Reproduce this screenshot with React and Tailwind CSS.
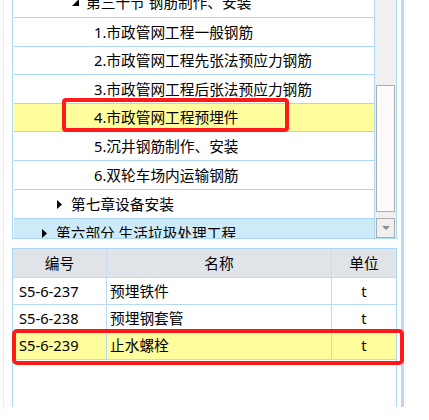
const font = { fontFamily: '"Noto Sans", "Noto Sans CJK SC", sans-serif' };

const Tri = () => (
    <svg width="5" height="9" viewBox="0 0 5 9" className="shrink-0">
        <polygon points="0,0 5,4.5 0,9" fill="#000" />
    </svg>
);

const treeRows = [
    { h: "h-[30px]", pl: "pl-[58px]", icon: "open", text: "第三十节 钢筋制作、安装" },
    { h: "h-[29px]", pl: "pl-[80px]", text: "1.市政管网工程一般钢筋" },
    { h: "h-[28px]", pl: "pl-[80px]", text: "2.市政管网工程先张法预应力钢筋" },
    { h: "h-[29px]", pl: "pl-[80px]", text: "3.市政管网工程后张法预应力钢筋" },
    { h: "h-[28px]", pl: "pl-[80px]", text: "4.市政管网工程预埋件", bg: "bg-[#fffd9c]" },
    { h: "h-[29px]", pl: "pl-[80px]", text: "5.沉井钢筋制作、安装" },
    { h: "h-[29px]", pl: "pl-[80px]", text: "6.双轮车场内运输钢筋" },
    { h: "h-[29px]", pl: "pl-[43px]", icon: "closed", text: "第七章设备安装" },
    { h: "h-[29px]", pl: "pl-[28px]", icon: "closed", text: "第六部分 生活垃圾处理工程", bg: "bg-[#cdeaf8]" },
];

const items = [
    { code: "S5-6-237", name: "预埋铁件", unit: "t" },
    { code: "S5-6-238", name: "预埋钢套管", unit: "t" },
    { code: "S5-6-239", name: "止水螺栓", unit: "t", hl: true },
];

export default function App() {
    return (
        <div className="w-[429px] h-[420px] bg-white relative overflow-hidden text-black" style={font}>
            <div className="ml-[3px] w-[401px] h-[407px] border-l border-l-[#ececec] border-r-[3px] border-r-[#c3d5e7] pl-[8px] pr-[4px] flex flex-col">
                {/* tree */}
                <div className="h-[239px] shrink-0 flex border-l border-r border-b border-[#aad8f4]">
                    <div className="flex-1 pl-[1px] overflow-hidden">
                        <div className="-mt-[12px]">
                            {treeRows.map((r, i) => (
                                <div
                                    key={i}
                                    className={`${r.h} ${r.pl} ${r.bg || "bg-white"} flex items-center border-b border-[#aad8f4] text-[14.7px] leading-none whitespace-nowrap`}
                                >
                                    {r.icon === "open" && (
                                        <svg width="7" height="7" viewBox="0 0 7 7" className="shrink-0 mr-[7px]">
                                            <polygon points="7,0 7,7 0,7" fill="#000" />
                                        </svg>
                                    )}
                                    {r.icon === "closed" && (
                                        <span className="mr-[9px] flex">
                                            <Tri />
                                        </span>
                                    )}
                                    <span>{r.text}</span>
                                </div>
                            ))}
                        </div>
                    </div>
                    <div className="w-[22px] shrink-0 border-l border-[#aad8f4] bg-[#f0f0f0] pl-[1px]">
                        <div className="mt-[85px] h-[127px] w-[19px] border border-[#adadad] bg-[#fbfbfb]" />
                        <div className="mt-[6px] h-[20px] w-[19px] border border-[#adadad] bg-[#f0f0f0] flex items-center justify-center">
                            <svg width="8" height="4" viewBox="0 0 8 4">
                                <polygon points="0,0 8,0 4,4" fill="#8c8c8c" />
                            </svg>
                        </div>
                    </div>
                </div>

                {/* table */}
                <div className="mt-[9px] flex-1 border-l border-r border-t border-[#aad8f4] text-[14.7px] leading-none">
                    <div className="h-[29px] grid grid-cols-[94px_225px_1fr] bg-[#e0e3e8] border-b border-[#b9dbf2]">
                        <div className="flex items-center justify-center border-r border-[#c6dbee]">编号</div>
                        <div className="flex items-center justify-center border-r border-[#c6dbee]">名称</div>
                        <div className="flex items-center justify-center">单位</div>
                    </div>
                    {items.map((it, i) => (
                        <div
                            key={i}
                            className={`${i === 2 ? "h-[28px]" : "h-[27px]"} grid grid-cols-[94px_225px_1fr] border-b border-[#b9dbf2] ${it.hl ? "bg-[#fffd9c]" : "bg-white"}`}
                        >
                            <div className="flex items-center pl-[6px] border-r border-[#b9dbf2]">{it.code}</div>
                            <div className="flex items-center pl-[3px] border-r border-[#b9dbf2]">{it.name}</div>
                            <div className="flex items-center justify-center">{it.unit}</div>
                        </div>
                    ))}
                </div>
            </div>

            {/* annotation boxes */}
            <div className="absolute left-[62px] top-[98px] w-[227px] h-[34px] border-[4px] border-[#ff1a1a] rounded-[4px]" />
            <div className="absolute left-[12px] top-[329px] w-[392px] h-[36px] border-[4px] border-[#ff1a1a] rounded-[5px]" />
        </div>
    );
}
